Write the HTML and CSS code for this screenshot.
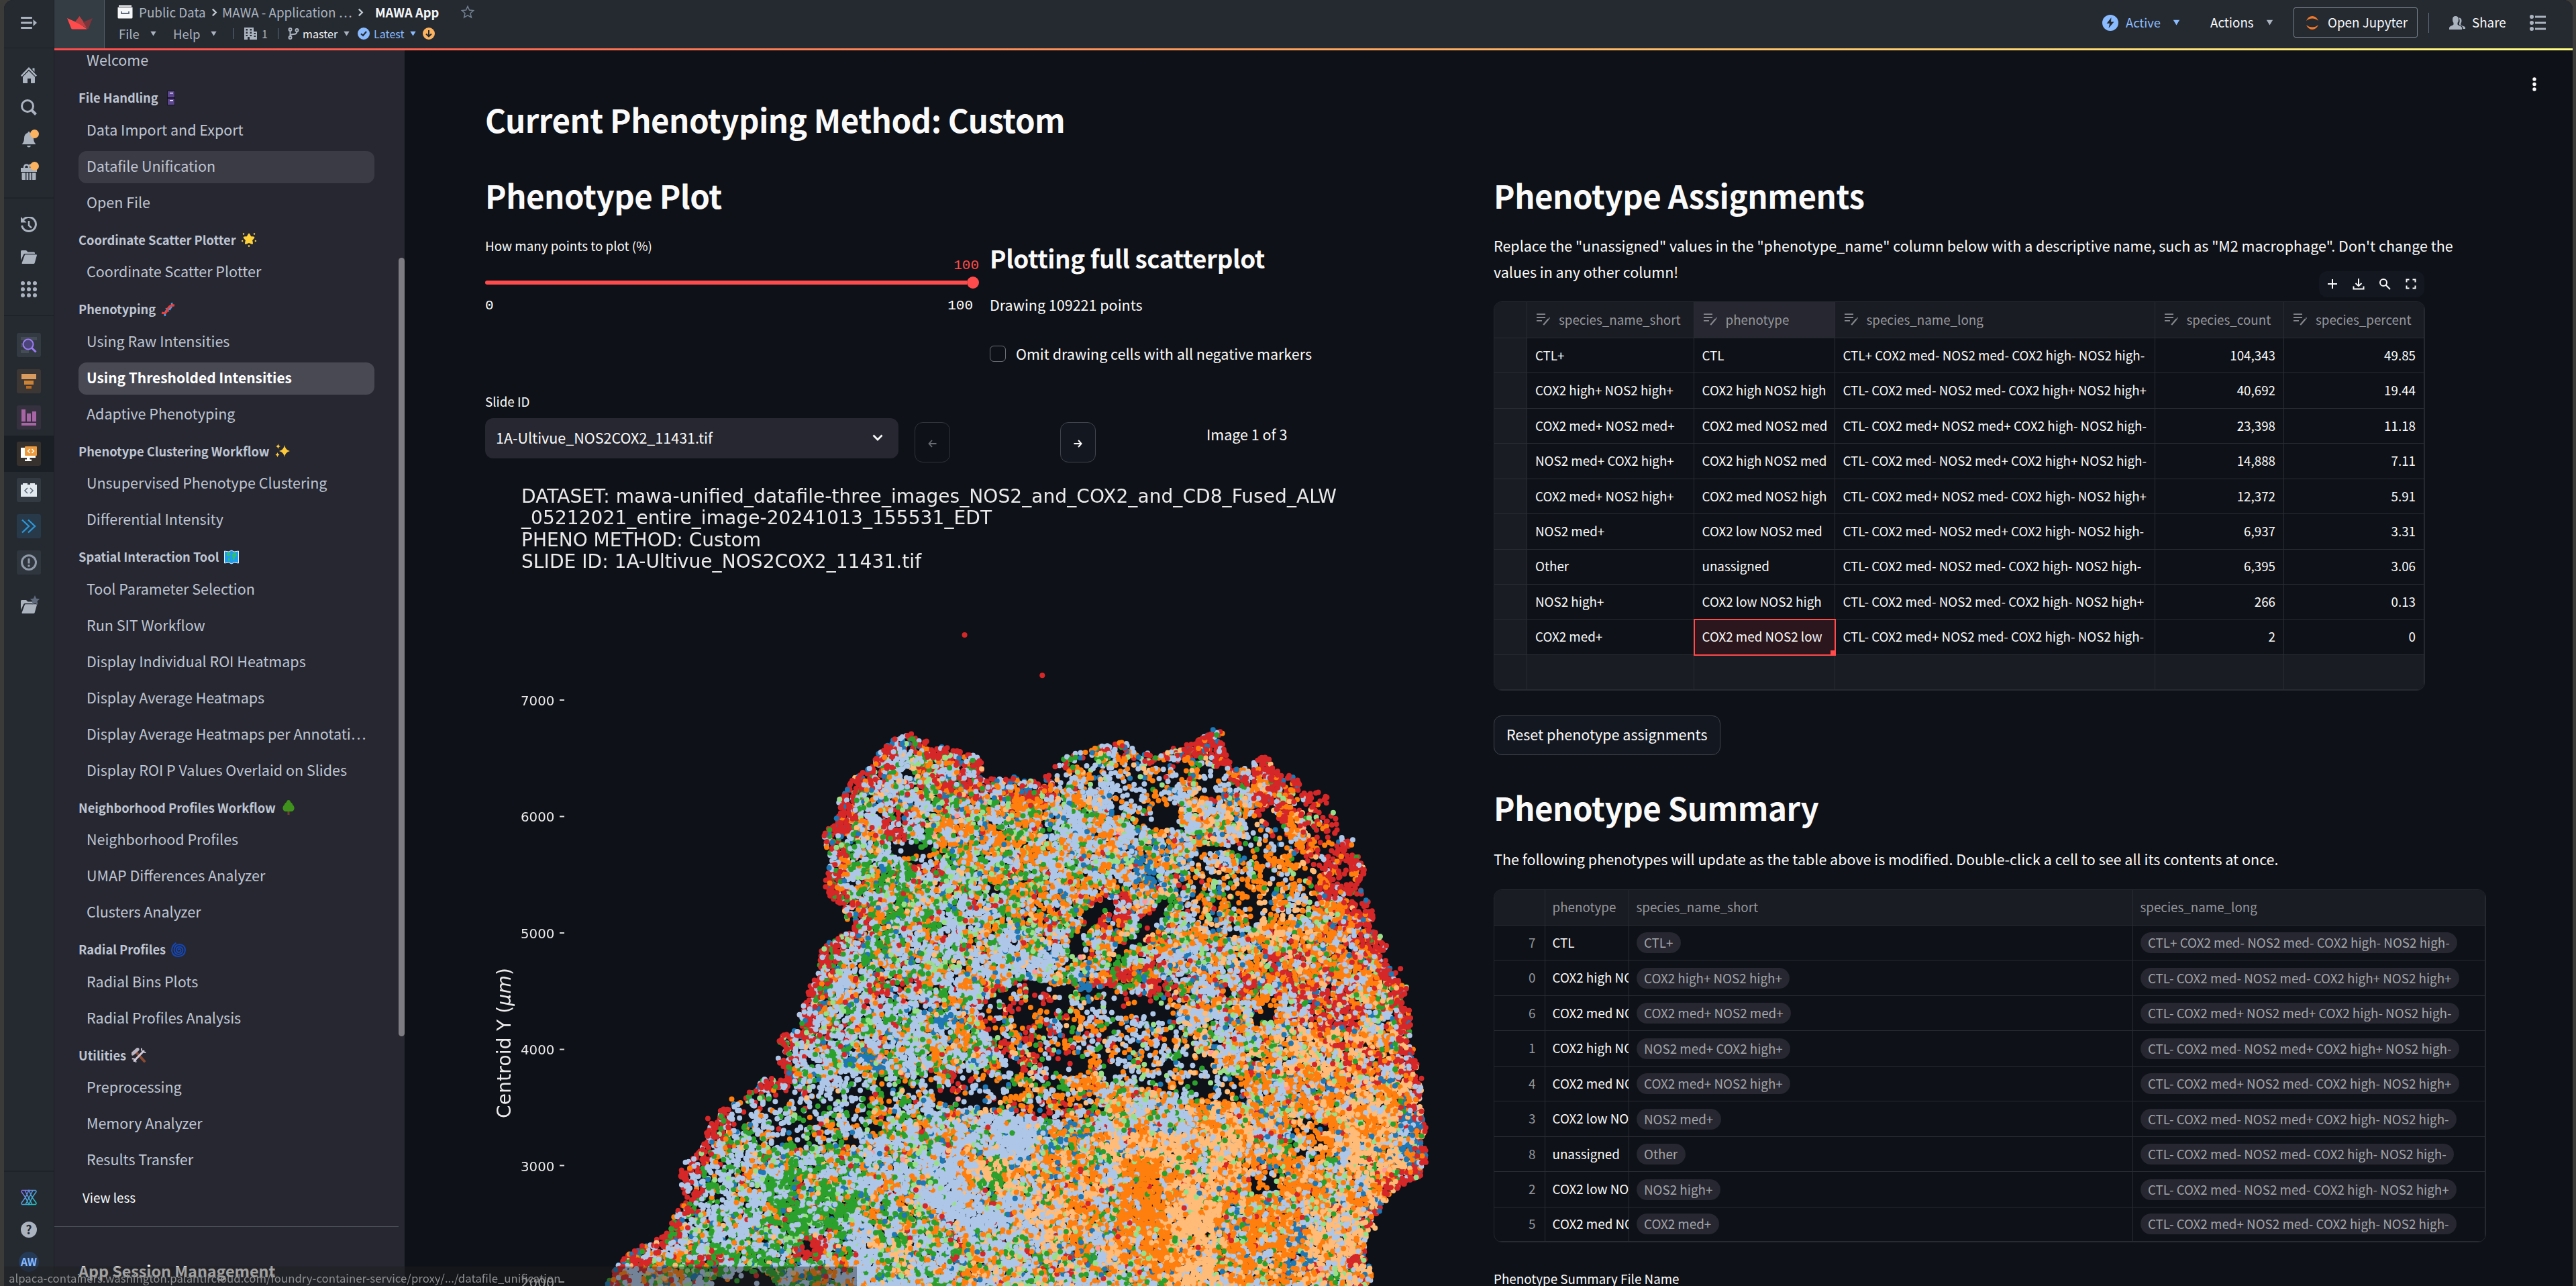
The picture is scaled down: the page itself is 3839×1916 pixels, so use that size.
FILE: index.html
```html
<!DOCTYPE html>
<html lang="en">
<head>
<meta charset="utf-8">
<title>MAWA App</title>
<link rel="stylesheet" href="styles.css">
</head>
<body>
<svg class="defs" aria-hidden="true">
  <symbol id="caret" viewBox="0 0 12 10"><path d="M.8.8h10.4L6 9.4z" fill="currentColor"/></symbol>
  <symbol id="chev" viewBox="0 0 10 14"><path d="M2 1.500 7.500 7 2 12.500" fill="none" stroke="currentColor" stroke-width="2.600"/></symbol>
  <symbol id="folder" viewBox="0 0 24 20"><path d="M0 15V1.500Q0 0 1.500 0H8l2.500 2.500H19.500Q21 2.500 21 4v1H6Q4.500 5 4 6.500z"/><path d="M5.800 7.200Q6.200 6.300 7 6.300H23Q24.200 6.300 23.900 7.500L20.800 18.500Q20.400 20 19 20H2.500Q1.200 20 1.600 18.700z"/></symbol>
  <symbol id="edit" viewBox="0 0 20 18"><g fill="none" stroke="currentColor" stroke-width="1.800"><path d="M0 1.200h13M0 6h13M0 10.800h8"/><path d="M10.200 17 18 8" stroke-width="2.200"/><path d="M18.600 7.400l.9-1"/></g></symbol>
</svg>
<div class="window">
  <nav class="rail">
    <div class="rail-top"><svg width="24" height="18" viewBox="0 0 24 18" fill="#abb3bf"><rect width="17" height="3" rx="1"/><rect y="7.500" width="17" height="3" rx="1"/><rect y="15" width="17" height="3" rx="1"/><path d="M18.500 4 24 9l-5.500 5z"/></svg></div>
    <div class="rail-group g1">
      <div class="ri"><svg width="24" height="24" viewBox="0 0 24 24" fill="#abb3bf"><path d="M12 0 24 12.500 22.300 14.200 12 3.600 1.700 14.200 0 12.500 5 7zM17.500 1.500H20.500V7L17.500 4z"/><path d="M3 14.500 12 5.600 21 14.500V23q0 1-1 1H15V17H10V24H4q-1 0-1-1z"/></svg></div>
      <div class="ri"><svg width="24" height="24" viewBox="0 0 24 24" fill="none" stroke="#abb3bf" stroke-width="3"><circle cx="10" cy="10" r="8.500"/><path d="M16.500 16.500 22.500 22.500" stroke-width="4"/></svg></div>
      <div class="ri"><svg width="24" height="24" viewBox="0 0 24 24" fill="#abb3bf"><path d="M12 0q1.600 0 1.600 1.800Q19 3.500 19 10q0 5.500 3.500 9H1.500Q5 15.500 5 10 5 3.500 10.400 1.800 10.400 0 12 0zM9 21h6q-.5 2.600-3 2.600T9 21z"/></svg><i></i></div>
      <div class="ri"><svg width="24" height="24" viewBox="0 0 24 24" fill="#abb3bf"><path d="M0 6H24V12H0zM1.500 13.500H7V24H2.500q-1 0-1-1zM8.500 13.500H11.300V24H8.500zM12.800 13.500H15.600V24H12.800zM17.100 13.500h5.400V23q0 1-1 1H17.100z"/><path d="M5 6Q5 1.500 8.500 1.500T12 6Q12 1.500 15.500 1.500T19 6" fill="none" stroke="#abb3bf" stroke-width="2.500"/></svg><i></i></div>
    </div>
    <div class="rail-group g2">
      <div class="ri"><svg width="24" height="24" viewBox="0 0 24 24" fill="none" stroke="#abb3bf" stroke-width="3"><path d="M3 5.500A10.500 10.500 0 1 1 1.600 13"/><path d="M12 6v7l4 3.500" stroke-width="2.500"/><path d="M0 0v8.500h8.500z" fill="#abb3bf" stroke="none"/></svg></div>
      <div class="ri"><svg width="24" height="20" fill="#abb3bf"><use href="#folder"/></svg></div>
      <div class="ri"><svg width="24" height="24" viewBox="0 0 24 24" fill="#abb3bf"><circle cx="3" cy="3" r="3"/><circle cx="12" cy="3" r="3"/><circle cx="21" cy="3" r="3"/><circle cx="3" cy="12" r="3"/><circle cx="12" cy="12" r="3"/><circle cx="21" cy="12" r="3"/><circle cx="3" cy="21" r="3"/><circle cx="12" cy="21" r="3"/><circle cx="21" cy="21" r="3"/></svg></div>
    </div>
    <div class="rail-group g3">
      <div class="app a1"><svg viewBox="0 0 36 36"><g fill="#454c55"><path d="M6 6H30V11H6zM6 15H18V21H6zM6 25H18V30H6z"/></g><g fill="#4a4478" stroke="#9a7bf5" stroke-width="2"><circle cx="17" cy="17" r="7.500"/><path d="M22.500 22.500 28.500 28.500" stroke-width="3"/></g></svg></div>
      <div class="app a2"><svg viewBox="0 0 36 36"><path d="M7 7H29V15H7z" fill="#d99b5e"/><path d="M11 17H25V23H11z" fill="#cd8336"/><path d="M14 25H22V29H14z" fill="#b96b20"/></svg></div>
      <div class="app a3"><svg viewBox="0 0 36 36" fill="#a765a5"><path d="M7 6H13V24H7zM15 12H21V24H15zM23 9H29V24H23zM7 26H29V30H7z"/></svg></div>
      <div class="app-sel"><div class="app a4"><svg viewBox="0 0 36 36"><path d="M6 9H28V24H19.500V26.500H22V29H12V26.500H15V24H6z" fill="#fff"/><rect x="12" y="7" width="18" height="14" rx="1" fill="#ec9a3c"/><path d="M19.500 11 16.500 14l3 3M22.500 11l3 3-3 3" fill="none" stroke="#fff" stroke-width="1.500"/></svg></div></div>
      <div class="app a5"><svg viewBox="0 0 36 36"><path d="M9 8H16V10H20V8H27V10H30V28H6V10H9z" fill="#e3eaef"/><path d="M16 15 12 19l4 4M20 15l4 4-4 4" fill="none" stroke="#5f6b7c" stroke-width="1.600"/></svg></div>
      <div class="app a6"><svg viewBox="0 0 36 36" fill="none" stroke="#2b95d6" stroke-width="2.400"><path d="M8 8.500 18 18 8 27.500M17 8.500 27 18 17 27.500"/></svg></div>
      <div class="app a7"><svg viewBox="0 0 36 36" fill="none" stroke="#8f99a8" stroke-width="3"><circle cx="18" cy="18" r="10.500"/><path d="M18 12v7.500M18 21.500v3"/></svg></div>
      <div class="ri fav"><svg width="28" height="28" viewBox="0 0 28 28"><g fill="#abb3bf"><svg y="7" width="24" height="20" viewBox="0 0 24 20"><use href="#folder"/></svg></g><path d="M21 0l2.200 4.800 5 .5-3.700 3.500 1 5.200-4.500-2.600-4.500 2.600 1-5.200L13.800 5.300l5-.5z" fill="#5f6b7c"/></svg></div>
    </div>
    <div class="rail-group g4">
      <div class="ri"><svg width="26" height="24" viewBox="0 0 26 24" fill="none" stroke-width="1.500"><defs><linearGradient id="aip" x1="0" y1="0" x2="1" y2="1"><stop offset="0" stop-color="#8a6cf0"/><stop offset=".5" stop-color="#4f9fd8"/><stop offset="1" stop-color="#13c9ba"/></linearGradient></defs><path d="M3 1.500H23Q24.500 2.500 23.800 4L18 12l5.800 8Q24.500 21.500 23 22.500H3Q1.500 21.500 2.200 20L8 12 2.200 4Q1.500 2.500 3 1.500zM7 1.500 18 22.500M19 1.500 8 22.500M8 12 13 1.500 18 12 13 22.500z" stroke="url(#aip)"/></svg></div>
      <div class="ri"><span class="help">?</span></div>
      <div class="ri"><span class="avatar">AW</span></div>
    </div>
  </nav>
  <div class="body">
    <header class="topbar">
      <div class="logo"><svg width="38" height="20" viewBox="0 0 38 20"><path d="M0 3 18 11 30 19.500H8Q6.500 19.500 6 18z" fill="#ff4b4b"/><path d="M18.500 0 26 10.500 31 19 12 8.500z" fill="#bd4043"/><path d="M38 3 32 18Q31.500 19.500 30.500 19.500L24 9z" fill="#7d353b"/></svg></div>
      <div class="crumbs">
        <div class="row1">
          <svg width="23" height="20" viewBox="0 0 23 20"><path d="M2 0H21V2H2zM.5 3H22.500V18q0 1.500-1.500 1.500H2Q.5 19.500.5 18z" fill="#f6f7f9"/><path d="M6 9v3h11V9" fill="none" stroke="#5f6b7c" stroke-width="1.800"/></svg>
          <span>Public Data</span><svg width="9" height="13" class="lt"><use href="#chev"/></svg>
          <span>MAWA - Application …</span><svg width="9" height="13" class="lt"><use href="#chev"/></svg>
          <b>MAWA App</b>
          <svg width="20" height="20" viewBox="0 0 20 20" fill="none" stroke="#738091" stroke-width="1.500"><path d="M10 1.500l2.500 5.600 6.200.6-4.700 4.100 1.400 6.200L10 14.800 4.600 18 6 11.800 1.300 7.700l6.200-.6z"/></svg>
        </div>
        <div class="row2">
          <span>File</span><svg width="11" height="8" class="gr"><use href="#caret"/></svg>
          <span>Help</span><svg width="11" height="8" class="gr"><use href="#caret"/></svg>
          <i class="sep"></i>
          <svg width="19" height="18" viewBox="0 0 19 18"><path fill-rule="evenodd" d="M1 0H14V6H19V18H8V14H5v4H0V0zM2.500 2v2.500H5V2zM8.500 2v2.500H11V2zM2.500 6.500V9H5V6.500zM8.500 6.500V9H11V6.500zM2.500 11v2H5v-2zM8.500 11v2H11v-2zM14.500 8v2H17V8zM14.500 12v2H17v-2z" fill="#abb3bf"/></svg>
          <span class="sm">1</span><i class="sep"></i>
          <svg width="17" height="18" viewBox="0 0 17 18" fill="none" stroke="#abb3bf" stroke-width="2"><circle cx="3.500" cy="3" r="2"/><circle cx="3.500" cy="15" r="2"/><circle cx="13.500" cy="4" r="2"/><path d="M3.500 5v8M13.500 6q0 4-5 4-5 .2-5 3"/></svg>
          <span class="wh sm">master</span><svg width="11" height="8" class="gr"><use href="#caret"/></svg>
          <svg width="18" height="18" viewBox="0 0 18 18"><circle cx="9" cy="9" r="9" fill="#8abbff"/><path d="M5 9.200 8 12l5-6" fill="none" stroke="#252a31" stroke-width="2.200"/></svg>
          <span class="bl sm">Latest</span><svg width="11" height="8" class="bl"><use href="#caret"/></svg>
          <svg width="18" height="18" viewBox="0 0 18 18"><circle cx="9" cy="9" r="9" fill="#fbb360"/><path d="M9 4v9M5 9.500 9 13.300l4-3.800" fill="none" stroke="#252a31" stroke-width="2"/></svg>
        </div>
      </div>
      <div class="actions">
        <svg width="24" height="24" viewBox="0 0 24 24"><circle cx="12" cy="12" r="12" fill="#8abbff"/><path d="M13.500 4 6.500 13H11L9.500 20 17.500 10.500H13z" fill="#252a31"/></svg>
        <span class="bl">Active</span><svg width="13" height="9" class="bl"><use href="#caret"/></svg>
        <span class="wh">Actions</span><svg width="13" height="9" class="gr"><use href="#caret"/></svg>
        <button class="jup"><svg width="18" height="20" viewBox="0 0 18 20" fill="#f37726"><path d="M0 7Q3 0 9 0t9 7Q14 3.500 9 3.500T0 7zM0 13Q3 20 9 20t9-7Q14 16.500 9 16.500T0 13z"/></svg><span>Open Jupyter</span></button>
        <i class="sep tall"></i>
        <svg width="24" height="20" viewBox="0 0 24 20" fill="#abb3bf"><path d="M9.500 0q4.500 0 4.500 5 0 3-1.500 5v2.500q1 1.500 4 2.300 2.500.8 2.500 3V20H0v-2.200q0-2.200 2.500-3 3-.8 4-2.300V10Q5 8 5 5 5 0 9.500 0z"/><path d="M14.500 2.500q4 0 4 4.500 0 2.500-1.200 4v2q.8 1 3.200 1.700 3.500 1 3.500 2.300V19h-3.500q.3-3.500-3-4.700-2.500-1-2.500-1.800V10.500Q16.500 7 14.500 2.500z"/></svg>
        <span class="wh">Share</span>
        <svg width="24" height="24" viewBox="0 0 24 24" fill="#abb3bf"><circle cx="3" cy="3" r="3"/><circle cx="3" cy="12" r="3"/><circle cx="3" cy="21" r="3"/><rect x="8" y="1.500" width="16" height="3"/><rect x="8" y="10.500" width="16" height="3"/><rect x="8" y="19.500" width="16" height="3"/></svg>
      </div>
    </header>
    <div class="panes">
      <aside class="side">
        <div class="nav">
          <a>Welcome</a>
          <h6>File Handling <svg class="em" viewBox="0 0 22 22"><path d="M5 0H17V22H5z" fill="#17141f"/><path d="M6 1H16V10H6zM6 12H16V21H6z" fill="#5b4591"/><path d="M9 3h5v1.500H9zM9 14h5v1.500H9z" fill="#e8e2f5"/></svg></h6>
          <a>Data Import and Export</a><a class="hover">Datafile Unification</a><a>Open File</a>
          <h6>Coordinate Scatter Plotter <svg class="em" viewBox="0 0 22 22" fill="#ffd23b"><path d="M11 3l2.200 4.200 4.800.6-3.200 3.800.9 5L11 14.500 6.300 16.600l.9-5L4 7.800l4.800-.6z" stroke="#ffd23b" stroke-width="2.600" stroke-linejoin="round"/><circle cx="3" cy="2.500" r="1.200"/><circle cx="19" cy="2.500" r="1.200"/><circle cx="1.200" cy="13" r="1.200"/><circle cx="20.800" cy="13" r="1.200"/><circle cx="11" cy="20.600" r="1.300"/></svg></h6>
          <a>Coordinate Scatter Plotter</a>
          <h6>Phenotyping <svg class="em" viewBox="0 0 22 22" fill="none" stroke-width="2.600"><path d="M7 9l5 5M10 8l4 4M3 16l3 3M16 3l3 3" stroke="#9aa7c9" stroke-width="1.200"/><path d="M6 21Q5 13 11 11T16 1" stroke="#3fa0ee"/><path d="M1 16Q8 18 10 11T20 5" stroke="#f03e3a" stroke-width="3"/></svg></h6>
          <a>Using Raw Intensities</a><a class="on">Using Thresholded Intensities</a><a>Adaptive Phenotyping</a>
          <h6>Phenotype Clustering Workflow <svg class="em" viewBox="0 0 22 22" fill="#fdc83a"><path d="M14 2Q15 9 22 11 15 13 14 20 13 13 6 11 13 9 14 2zM4.500 0Q5 3.500 8 4 5 4.500 4.500 8 4 4.500 1 4 4 3.500 4.500 0zM3.500 13Q4 16 6.500 16.500 4 17 3.500 20.500 3 17 .5 16.500 3 16 3.500 13z"/></svg></h6>
          <a>Unsupervised Phenotype Clustering</a><a>Differential Intensity</a>
          <h6>Spatial Interaction Tool <svg class="em" viewBox="0 0 22 22"><path d="M.5 2 7 3l4-2 4 2 6.500-1V20L15 19l-4 2-4-2-6.500 1z" fill="#1e9df0" stroke="#e4f3ff"/><path d="M4 5 8 4l2 3-3 3-3-1zM6 12l3 1-1 5-2-2zM12 6l5-2 2 4-3 4-1 4-2-1z" fill="#2fbf71"/></svg></h6>
          <a>Tool Parameter Selection</a><a>Run SIT Workflow</a><a>Display Individual ROI Heatmaps</a><a>Display Average Heatmaps</a><a>Display Average Heatmaps per Annotati…</a><a>Display ROI P Values Overlaid on Slides</a>
          <h6>Neighborhood Profiles Workflow <svg class="em" viewBox="0 0 22 22"><path d="M9.500 14h3v8h-3z" fill="#6d4030"/><path d="M11 0q2.500 0 3 3 3 1.500 3.500 4.500Q20 9.500 19.500 13q-.8 4-4.500 4H7q-3.700 0-4.500-4Q2 9.500 4.500 7.500 5 4.500 8 3q.5-3 3-3z" fill="#3f921b"/></svg></h6>
          <a>Neighborhood Profiles</a><a>UMAP Differences Analyzer</a><a>Clusters Analyzer</a>
          <h6>Radial Profiles <svg class="em" viewBox="0 0 22 22" fill="none" stroke="#1447b8" stroke-width="2"><path d="M7.500 1Q1 4.500 1 12.500 2.500 21 11 21q9.500-.5 10-9.500Q20.500 3.500 12.500 3 5 3.500 4.500 11q.5 6.500 6.500 7 6-.5 6.500-6.500Q17 7 12 6.500 7.500 7.500 7.700 11.500 8.500 15 11.500 15q3-.5 3-3.300Q14 9.500 12 9.700q-1.800.6-1.200 2.300"/></svg></h6>
          <a>Radial Bins Plots</a><a>Radial Profiles Analysis</a>
          <h6>Utilities <svg class="em" viewBox="0 0 22 22" fill="none" stroke-linecap="round"><path d="M8 8 19 20" stroke="#8a4b32" stroke-width="4"/><path d="M1.500 9 9 2.500" stroke="#b9b4c2" stroke-width="5"/><path d="M4 19.500 18 5" stroke="#cfc9d8" stroke-width="3"/><path d="M15 1.500Q14.500 6.500 20.500 7M1.500 16.500Q6 16 6.500 21" stroke="#cfc9d8" stroke-width="2"/></svg></h6>
          <a>Preprocessing</a><a>Memory Analyzer</a><a>Results Transfer</a>
          <div class="less">View less</div>
          <hr>
          <h3>App Session Management</h3>
        </div>
        <div class="track"><div class="bar"></div></div>
      </aside>
      <main class="main">
        <svg class="kebab" width="6" height="22" viewBox="0 0 6 22" fill="#fafafa"><circle cx="3" cy="3" r="2.700"/><circle cx="3" cy="10.500" r="2.700"/><circle cx="3" cy="18" r="2.700"/></svg>
        <h2 class="title">Current Phenotyping Method: Custom</h2>
        <div class="cols">
          <section>
            <h2>Phenotype Plot</h2>
            <div class="ctl">
              <div>
                <div class="label">How many points to plot (%)</div>
                <div class="val">100</div>
                <div class="slider"><div class="line"></div><div class="thumb"></div></div>
                <div class="bounds"><span>0</span><span>100</span></div>
              </div>
              <div>
                <h3 class="h3">Plotting full scatterplot</h3>
                <p class="draw">Drawing 109221 points</p>
                <label class="check"><i></i>Omit drawing cells with all negative markers</label>
              </div>
            </div>
            <div class="slide">
              <div><div class="label">Slide ID</div>
                <div class="select"><span>1A-Ultivue_NOS2COX2_11431.tif</span><svg width="16" height="10" viewBox="0 0 16 10"><path d="M1.500 1.500 8 8l6.500-6.500" fill="none" stroke="#fafafa" stroke-width="2.800"/></svg></div></div>
              <button class="arrow off"><svg width="13" height="12" viewBox="0 0 13 12"><path d="M12.500 6H1.500M6 1 1.500 6 6 11" fill="none" stroke="currentColor" stroke-width="1.800"/></svg></button>
              <button class="arrow"><svg width="13" height="12" viewBox="0 0 13 12"><path d="M.5 6h11M7 1l4.500 5L7 11" fill="none" stroke="currentColor" stroke-width="2"/></svg></button>
              <p class="count">Image 1 of 3</p>
            </div>
            <div class="plot">
              <canvas id="cells" width="1479" height="1211"></canvas>
              <svg viewBox="723 705 1479 1211" width="1479" height="1211" class="axes">
                <g font-size="28">
                  <text x="777" y="749" textLength="1215">DATASET: mawa-unified_datafile-three_images_NOS2_and_COX2_and_CD8_Fused_ALW</text>
                  <text x="777" y="781" textLength="701">_05212021_entire_image-20241013_155531_EDT</text>
                  <text x="777" y="814" textLength="357">PHENO METHOD: Custom</text>
                  <text x="777" y="846" textLength="596">SLIDE ID: 1A-Ultivue_NOS2COX2_11431.tif</text>
                  <text transform="translate(761 1666) rotate(-90)" textLength="224">Centroid Y (<tspan font-style="italic">μm</tspan>)</text>
                </g>
                <g font-size="19.800">
                  <text x="776" y="1051">7000</text><text x="776" y="1224">6000</text><text x="776" y="1398">5000</text><text x="776" y="1571">4000</text><text x="776" y="1745">3000</text><text x="776" y="1918">2000</text>
                </g>
                <path d="M834 1043H841M834 1216.500H841M834 1390H841M834 1563.500H841M834 1736.500H841M834 1910H841" stroke="#d8d8d8" stroke-width="2"/>
              </svg>
            </div>
          </section>
          <section>
            <h2>Phenotype Assignments</h2>
            <p class="para">Replace the "unassigned" values in the "phenotype_name" column below with a descriptive name, such as "M2 macrophage". Don't change the values in any other column!</p>
            <div class="wrap">
              <div class="tools">
                <svg viewBox="0 0 18 18"><path d="M9 2v14M2 9h14"/></svg>
                <svg viewBox="0 0 18 18"><path d="M9 1v11M4.500 8 9 12.200 13.500 8M1.500 12.500v4h15v-4"/></svg>
                <svg viewBox="0 0 18 18"><circle cx="7" cy="7" r="5"/><path d="M10.500 10.500 17 17"/></svg>
                <svg viewBox="0 0 18 18"><path d="M2.500 6.500v-4h4M11.500 2.500h4v4M15.500 11.500v4h-4M6.500 15.500h-4v-4"/></svg>
              </div>
              <div class="t1">
                <b></b><b><svg><use href="#edit"/></svg>species_name_short</b><b class="act"><svg><use href="#edit"/></svg>phenotype</b><b><svg><use href="#edit"/></svg>species_name_long</b><b><svg><use href="#edit"/></svg>species_count</b><b><svg><use href="#edit"/></svg>species_percent</b>
                <i></i><i>CTL+</i><i>CTL</i><i>CTL+ COX2 med- NOS2 med- COX2 high- NOS2 high-</i><i>104,343</i><i>49.85</i>
                <i></i><i>COX2 high+ NOS2 high+</i><i>COX2 high NOS2 high</i><i>CTL- COX2 med- NOS2 med- COX2 high+ NOS2 high+</i><i>40,692</i><i>19.44</i>
                <i></i><i>COX2 med+ NOS2 med+</i><i>COX2 med NOS2 med</i><i>CTL- COX2 med+ NOS2 med+ COX2 high- NOS2 high-</i><i>23,398</i><i>11.18</i>
                <i></i><i>NOS2 med+ COX2 high+</i><i>COX2 high NOS2 med</i><i>CTL- COX2 med- NOS2 med+ COX2 high+ NOS2 high-</i><i>14,888</i><i>7.11</i>
                <i></i><i>COX2 med+ NOS2 high+</i><i>COX2 med NOS2 high</i><i>CTL- COX2 med+ NOS2 med- COX2 high- NOS2 high+</i><i>12,372</i><i>5.91</i>
                <i></i><i>NOS2 med+</i><i>COX2 low NOS2 med</i><i>CTL- COX2 med- NOS2 med+ COX2 high- NOS2 high-</i><i>6,937</i><i>3.31</i>
                <i></i><i>Other</i><i>unassigned</i><i>CTL- COX2 med- NOS2 med- COX2 high- NOS2 high-</i><i>6,395</i><i>3.06</i>
                <i></i><i>NOS2 high+</i><i>COX2 low NOS2 high</i><i>CTL- COX2 med- NOS2 med- COX2 high- NOS2 high+</i><i>266</i><i>0.13</i>
                <i></i><i>COX2 med+</i><i class="sel">COX2 med NOS2 low</i><i>CTL- COX2 med+ NOS2 med- COX2 high- NOS2 high-</i><i>2</i><i>0</i>
                <b></b><b></b><b></b><b></b><b></b><b></b>
              </div>
            </div>
            <button class="reset">Reset phenotype assignments</button>
            <h2 class="sum">Phenotype Summary</h2>
            <p class="para p2">The following phenotypes will update as the table above is modified. Double-click a cell to see all its contents at once.</p>
            <div class="t2">
              <b></b><b>phenotype</b><b>species_name_short</b><b>species_name_long</b>
              <i>7</i><i>CTL</i><i><u>CTL+</u></i><i><u>CTL+ COX2 med- NOS2 med- COX2 high- NOS2 high-</u></i>
              <i>0</i><i>COX2 high NOS2 high</i><i><u>COX2 high+ NOS2 high+</u></i><i><u>CTL- COX2 med- NOS2 med- COX2 high+ NOS2 high+</u></i>
              <i>6</i><i>COX2 med NOS2 med</i><i><u>COX2 med+ NOS2 med+</u></i><i><u>CTL- COX2 med+ NOS2 med+ COX2 high- NOS2 high-</u></i>
              <i>1</i><i>COX2 high NOS2 med</i><i><u>NOS2 med+ COX2 high+</u></i><i><u>CTL- COX2 med- NOS2 med+ COX2 high+ NOS2 high-</u></i>
              <i>4</i><i>COX2 med NOS2 high</i><i><u>COX2 med+ NOS2 high+</u></i><i><u>CTL- COX2 med+ NOS2 med- COX2 high- NOS2 high+</u></i>
              <i>3</i><i>COX2 low NOS2 med</i><i><u>NOS2 med+</u></i><i><u>CTL- COX2 med- NOS2 med+ COX2 high- NOS2 high-</u></i>
              <i>8</i><i>unassigned</i><i><u>Other</u></i><i><u>CTL- COX2 med- NOS2 med- COX2 high- NOS2 high-</u></i>
              <i>2</i><i>COX2 low NOS2 high</i><i><u>NOS2 high+</u></i><i><u>CTL- COX2 med- NOS2 med- COX2 high- NOS2 high+</u></i>
              <i>5</i><i>COX2 med NOS2 low</i><i><u>COX2 med+</u></i><i><u>CTL- COX2 med+ NOS2 med- COX2 high- NOS2 high-</u></i>
            </div>
            <div class="label fname">Phenotype Summary File Name</div>
          </section>
        </div>
      </main>
    </div>
  </div>
  <div class="status">alpaca-containers.washington.palantircloud.com/foundry-container-service/proxy/.../datafile_unification</div>
</div>
<script src="plot.js"></script>
</body>
</html>
```
FILE: styles.css
```css
* { box-sizing: border-box; }
html, body { margin: 0; padding: 0; }
body { width: 3839px; height: 1916px; overflow: hidden; background: #3b3b39; color: #fafafa; font-family: "Noto Sans CJK SC", "Noto Sans", sans-serif; font-size: 21.500px; line-height: 1; }
h2, h3, h6, p { margin: 0; }
i, u { font-style: normal; text-decoration: none; }
svg { flex: none; display: block; }
button { font: inherit; color: inherit; padding: 0; margin: 0; }
.defs { position: absolute; width: 0; height: 0; }
.window { position: relative; display: flex; width: 3828px; height: 1916px; margin-left: 6px; border-radius: 14px 14px 0 0; overflow: hidden; background: #0e1117; }

.rail { width: 75px; height: 1916px; flex: none; background: #252a31; border-right: 1px solid #1b1f26; display: flex; flex-direction: column; }
.rail-top { height: 72px; border-bottom: 1px solid #1b1f26; display: flex; align-items: center; justify-content: center; padding-bottom: 3px; }
.rail-group { display: flex; flex-direction: column; align-items: center; border-bottom: 2px solid #1e2329; }
.ri { position: relative; height: 48px; width: 100%; flex: none; display: flex; align-items: center; justify-content: center; }
.ri > i { position: absolute; left: 39px; top: 9px; width: 13px; height: 13px; border-radius: 50%; background: #fbb360; }
.g1 { height: 224px; padding-top: 16px; }
.g2 { height: 175px; padding-top: 15px; }
.g3 { flex: 1; padding-top: 16px; border: 0; }
.g4 { height: 172px; padding-top: 14px; border: 0; border-top: 2px solid #1e2329; }
.app { width: 36px; height: 36px; margin: 9px 0; border-radius: 3px; background: #343a42; flex: none; }
.app-sel { width: 100%; height: 54px; flex: none; background: #1a1f25; display: flex; justify-content: center; }
.a2 { background: #3c3734; }
.a3 { background: #35313e; }
.a4 { background: #37312e; }
.a6 { background: #28394a; }
.a7 { background: #30363e; }
.fav { height: 62px; padding-left: 4px; margin-top: 5px; }
.help { width: 24px; height: 24px; border-radius: 50%; background: #abb3bf; color: #252a31; font-weight: 700; font-size: 18px; line-height: 22px; text-align: center; }
.avatar { width: 30px; height: 30px; border-radius: 50%; background: #253a56; color: #8abbff; font-weight: 700; font-size: 15.500px; line-height: 28px; text-align: center; }

.body { flex: 1; display: flex; flex-direction: column; min-width: 0; }
.topbar { height: 75px; flex: none; display: flex; background: #252a31; border-bottom: 3px solid; border-image: linear-gradient(90deg, #ff4b4b, #ffa35b 50%, #fffd80) 1; }
.logo { width: 75px; height: 72px; background: #343c44; border-right: 1px solid #555c66; display: flex; align-items: center; justify-content: center; padding: 0 0 5px 2px; }
.crumbs { padding-left: 19px; flex: 1; color: #abb3bf; font-size: 18.500px; white-space: nowrap; }
.row1 { height: 37px; display: grid; grid-template-columns: 32px 108px 16px 202px 26px 128px 30px; align-items: center; font-size: 18.800px; padding-bottom: 1px; }
.row1 b, .wh { color: #f6f7f9; }
.row1 b { font-size: 18.300px; }
.lt { color: #c5cbd3; }
.row2 { height: 26px; padding-left: 2px; display: grid; grid-template-columns: 46px 35px 55px 34px 17px 26px 24px 15px 22px 60px 22px 24px 53px 20px 20px; align-items: center; }
.sm { font-size: 16.100px; }
.sep { width: 1px; height: 16px; background: #5f6b7c; }
.gr { color: #abb3bf; }
.bl { color: #8abbff; }
.actions { display: grid; grid-template-columns: 35px 69px 57px 82px 42px 201px 31px 34px 86px 24px; align-items: center; width: 701px; padding-bottom: 5px; height: 72px; font-size: 18.800px; white-space: nowrap; }
.actions > .bl:nth-child(2) { font-size: 18.400px; }
.jup { width: 185px; height: 45px; border: 1px solid #7b828d; border-radius: 3px; background: none; display: flex; align-items: center; padding-left: 18px; gap: 14px; color: #f6f7f9; }
.sep.tall { height: 30px; }

.panes { flex: 1; display: flex; min-height: 0; }
.side { width: 522px; flex: none; background: #262730; display: flex; overflow: hidden; }
.nav { width: 513px; height: 1841px; overflow: hidden; }
.nav > a:first-child { margin-top: -8px; }
.nav a { display: block; height: 48px; margin: 0 36px 6px; padding-left: 12px; border-radius: 12px; line-height: 44px; color: #bfc5d3; white-space: nowrap; }
.nav a.hover { background: #3b3b46; }
.nav a.on { background: #484953; color: #fff; font-weight: 700; font-size: 20.900px; }
.nav h6 { height: 49.500px; margin-top: -4px; margin-bottom: 4px; padding: 8px 0 0 36px; line-height: 41.500px; font-size: 18.250px; color: #bfc5d3; display: flex; align-items: center; gap: 8px; white-space: nowrap; }
.em { width: 22px; height: 22px; }
.less { margin: -4px 0 0 42px; height: 58px; line-height: 58px; font-size: 18.800px; }
.nav hr { margin: 14px 0 0; border: 0; height: 1px; background: #50525b; }
.nav h3 { margin: 40px 0 0 36px; line-height: 50px; font-size: 23.300px; }
.track { width: 9px; padding-top: 309px; }
.bar { height: 1160px; width: 9px; border-radius: 5px; background: #7d7c83; }

.main { flex: 1; position: relative; padding: 69px 0 0 120px; overflow: hidden; }
.kebab { position: absolute; left: 3171px; top: 40px; }
h2 { font-size: 47.400px; line-height: 65px; height: 65px; font-weight: 700; white-space: nowrap; letter-spacing: -.450px; }
.title { line-height: 67px; letter-spacing: -.500px; }
.cols { margin-top: 48.500px; display: grid; grid-template-columns: 1479px 1490px; gap: 24px; }
.label { font-size: 18.800px; line-height: 30px; height: 30px; }
.ctl { margin-top: 28.500px; display: grid; grid-template-columns: 736px 1fr; gap: 16px; height: 188px; }
.val, .bounds { font-family: "Liberation Mono", monospace; font-size: 21px; }
.val { height: 28px; line-height: 30px; text-align: right; color: #ff4b4b; }
.slider { height: 24px; display: flex; align-items: center; }
.line { width: 719px; height: 6px; border-radius: 3px 0 0 3px; background: #ff4b4b; }
.thumb { width: 18px; height: 18px; border-radius: 50%; background: #ff4b4b; }
.bounds { margin: 7px 9px 0 0; height: 30px; line-height: 31px; display: flex; justify-content: space-between; }
.h3 { margin-top: 7.600px; font-size: 36.800px; line-height: 50px; letter-spacing: -.400px; }
.draw { margin-top: 26.400px; line-height: 37px; height: 38px; }
.check { margin-top: 42px; display: flex; gap: 15px; line-height: 23px; height: 24px; }
.check i { width: 24px; height: 24px; border: 1.500px solid #6c6f78; border-radius: 6px; }
.slide { margin-top: 44px; display: grid; grid-template-columns: 616px 193px 194px 1fr; gap: 24px; height: 122px; }
.select { margin-top: 10px; height: 60px; border-radius: 12px; background: #262730; display: flex; align-items: center; justify-content: space-between; padding: 0 23px 2px 16px; }
.arrow { margin-top: 46px; width: 53px; height: 60px; border: 1px solid #41444c; border-radius: 12px; background: #131720; display: flex; align-items: center; justify-content: center; padding-top: 4px; }
.off { border-color: #32343b; background: none; color: #696c73; }
.count { margin-top: 46px; line-height: 36px; }
.plot { display: grid; }
.plot > * { grid-area: 1 / 1; }
.axes { font-family: "DejaVu Sans", sans-serif; fill: #ebebeb; }
.para { margin-top: 24.500px; line-height: 38.800px; width: 1490px; }
.wrap { position: relative; margin-top: 24.400px; }
.tools { position: absolute; left: 1230px; top: -45px; width: 157px; height: 39px; border-radius: 12px; background: #131720; display: flex; justify-content: space-around; align-items: center; }
.tools svg { width: 18px; height: 18px; fill: none; stroke: #fafafa; stroke-width: 2; }
.t1, .t2 { display: grid; border: 1px solid #25282f; border-radius: 12px; overflow: hidden; font-size: 18.800px; white-space: nowrap; }
.t1 { width: 1388px; height: 580px; grid-template-columns: 49px 248.500px 210px 477px 192.500px 1fr; grid-template-rows: 54px repeat(9, 52.450px) 1fr; }
.t2 { width: 1479px; height: 526px; margin-top: 25.600px; grid-template-columns: 75.500px 125px 751px 1fr; grid-template-rows: 53px repeat(8, 52.500px) 1fr; }
.t1 > *, .t2 > * { border-right: 1px solid #2a2c34; border-bottom: 1px solid #2a2c34; padding: 0 12px 1px; display: flex; align-items: center; overflow: hidden; min-width: 0; }
.t1 > b, .t2 > b, .t1 > :nth-child(6n+1) { background: #1a1c24; color: #94969b; font-weight: 400; }
.t1 > b { padding-right: 0; }
.t1 > b.act { background: #262730; }
.t1 b svg { width: 20px; height: 18px; margin: 0 13px 0 2px; color: #85878c; }
.t1 i:nth-child(6n+5), .t1 i:nth-child(6n) { justify-content: flex-end; }
.t1 .sel { position: relative; background: #2a161c; outline: 2px solid #ff4b4b; outline-offset: -1px; overflow: visible; z-index: 1; }
.sel::after { content: ""; position: absolute; right: -1px; bottom: -1px; width: 7px; height: 7px; background: #ff4b4b; }
.t2 > * { padding-left: 11px; }
.t2 > i:nth-child(4n+1) { justify-content: flex-end; color: #94969b; padding-right: 13px; }
.t2 > i:nth-child(4n+2) { padding-right: 0; }
.t2 u { height: 31px; line-height: 29px; border-radius: 16px; padding: 0 11.500px; background: #262730; color: #a3a4a9; margin-top: 1px; }
.reset { display: block; margin-top: 37px; width: 337.500px; height: 59px; border: 1px solid #41444c; border-radius: 12px; background: #131720; padding-bottom: 3px; }
.sum { margin-top: 45.500px; }
.p2 { margin-top: 25.500px; line-height: 38.400px; }
.fname { margin-top: 39px; }
.status { position: absolute; left: 0; bottom: 0; width: 1271px; height: 29px; padding-left: 7px; line-height: 34px; font-size: 16.800px; background: rgba(30, 30, 30, .4); color: #8f9092; white-space: nowrap; }
```
FILE: plot.js
```js
// Cell scatter: one dot per cell, coloured by phenotype (tab20 palette).
const ctx = document.getElementById('cells').getContext('2d');
const COLORS = ['#1f77b4', '#aec7e8', '#ff7f0e', '#ffbb78', '#2ca02c', '#98df8a', '#d62728', '#ff9896'];
const BLUE = 0, LBLUE = 1, ORANGE = 2, LORANGE = 3, GREEN = 4, LGREEN = 5, RED = 6;

// Tissue coordinates to canvas pixels.
const SX = 1500 / 1568, SY = 1016 / 1568;
const px = u => u * SX - 23, py = v => v * SY + 195;

const outline = [[205,1590],[222,1535],[245,1495],[270,1475],[305,1450],[322,1400],[335,1360],[328,1300],[345,1270],[365,1225],[390,1170],[410,1130],[445,1120],[455,1090],[490,1095],[490,1050],[478,1010],[485,990],[515,975],[512,940],[528,890],[540,850],[545,800],[565,770],[590,755],[598,720],[570,700],[555,650],[562,600],[555,530],[572,490],[585,430],[600,395],[625,375],[640,335],[660,310],[680,302],[715,320],[755,335],[775,345],[798,350],[800,390],[830,405],[860,390],[885,425],[905,380],[930,350],[970,335],[1010,318],[1070,355],[1090,335],[1130,318],[1160,290],[1185,325],[1180,370],[1210,380],[1240,340],[1255,380],[1290,410],[1325,435],[1345,500],[1368,540],[1385,600],[1400,680],[1410,750],[1430,810],[1455,870],[1465,950],[1475,1080],[1485,1170],[1492,1280],[1480,1320],[1440,1350],[1415,1400],[1400,1460],[1400,1510],[1410,1590]];

// Sparse areas: share of cells kept, then the polygon.
const voids = [
  [.4, [[905,380],[960,345],[1060,360],[1180,370],[1200,430],[1150,450],[1100,430],[1000,420],[900,430]]],
  [.3, [[1000,430],[1080,420],[1110,470],[1110,520],[1070,520],[1010,500]]],
  [.06, [[1030,480],[1100,480],[1110,520],[1060,525]]],
  [.3, [[1190,470],[1240,460],[1270,520],[1290,560],[1250,580],[1200,520]]],
  [.45, [[1130,560],[1200,540],[1320,570],[1330,650],[1290,720],[1240,740],[1180,770],[1110,720],[1100,640]]],
  [.48, [[1260,400],[1330,440],[1360,560],[1390,700],[1340,650],[1320,560],[1290,500]]],
  [.04, [[985,665],[1005,680],[960,770],[935,850],[925,840],[945,750]]],
  [.04, [[1075,680],[1095,690],[1060,760],[1020,810],[1000,850],[995,820],[1040,740]]],
  [.36, [[790,900],[860,868],[950,880],[1000,880],[1110,890],[1100,950],[1140,1020],[1200,1090],[1215,1150],[1130,1140],[1060,1120],[980,1090],[900,1085],[830,1070],[800,960]]],
  [.02, [[850,865],[890,868],[935,882],[920,900],[860,880]]],
  [.14, [[990,900],[1090,900],[1060,950],[1000,940]]],
  [.05, [[900,1050],[980,1040],[970,1075],[900,1085]]],
  [.45, [[690,1085],[830,1060],[960,1110],[1000,1170],[930,1190],[850,1170],[720,1170]]],
  [.06, [[720,1120],[800,1130],[800,1155],[730,1150]]],
  [.49, [[400,1140],[560,1080],[700,1090],[710,1180],[600,1240],[470,1250],[400,1210]]],
  [.6, [[335,1290],[370,1230],[430,1220],[430,1300],[380,1420],[330,1430]]],
  [.3, [[1200,1280],[1260,1300],[1260,1350],[1220,1360]]],
  [.5, [[1280,1180],[1340,1190],[1330,1290],[1270,1290]]],
  [.25, [[1220,970],[1250,890],[1265,890],[1240,980]]],
  [.03, [[370,1590],[390,1550],[430,1528],[465,1540],[490,1590]]],
  [.1, [[515,1455],[535,1465],[540,1490],[515,1480]]],
  [.35, [[650,540],[720,545],[750,590],[700,610],[650,570]]]
];

// Local enrichments: colour, centre, radii, weight.
const zones = [
  [RED,660,495,32,45,5],[RED,715,615,25,40,2],[RED,1330,940,48,55,14],[RED,1290,840,45,55,6],[RED,1200,870,35,35,5],
  [RED,1005,715,26,50,10],[RED,1065,780,20,60,9],[RED,1030,880,90,40,4],[RED,870,905,60,40,6],[RED,655,880,60,30,4],
  [RED,1265,470,40,55,7],[RED,1350,560,40,110,22],[RED,1385,720,25,90,12],[RED,900,1000,110,80,2.4],[RED,1390,1060,60,50,3],[RED,530,1478,24,26,25],
  [RED,370,1505,50,22,4],[RED,700,400,90,30,2.2],[RED,1330,880,60,20,3],[RED,560,1000,35,40,3],[RED,910,1160,50,30,3],
  [RED,760,1110,30,30,3],[RED,480,1105,30,30,8],[RED,1165,315,30,30,14],[RED,1240,370,20,30,3],[RED,800,420,60,30,3],[RED,590,730,30,30,3],
  [LBLUE,650,440,60,45,4],[LBLUE,830,1225,42,48,90],[LBLUE,750,1325,22,70,70],[LBLUE,520,1465,60,45,9],[LBLUE,400,1340,60,120,8],
  [LBLUE,870,830,80,40,5],[LBLUE,1105,1190,32,50,14],[LBLUE,1225,540,30,50,5],[LBLUE,840,1410,80,45,16],[LBLUE,690,980,110,70,3],
  [LBLUE,620,1490,30,90,14],[LBLUE,1000,1290,22,70,9],[LBLUE,660,370,40,40,4],[LBLUE,540,1040,50,60,6],[LBLUE,970,560,60,60,1.5],
  [LBLUE,1130,830,60,60,2],[LBLUE,1100,420,120,60,3],[LBLUE,520,1150,130,60,6],[LBLUE,980,480,60,90,2.5],[LBLUE,600,1280,60,60,3],[LBLUE,1040,1020,60,90,3],
  [LBLUE,760,830,120,140,1.4],[LBLUE,1120,540,80,90,2],[LBLUE,1160,980,50,60,2],
  [LORANGE,820,1300,36,40,24],[LORANGE,1060,1240,70,45,14],[LORANGE,1125,1450,38,120,26],[LORANGE,1175,1240,38,80,13],[LORANGE,1310,1030,90,60,4],
  [LORANGE,1410,1180,70,130,4],[LORANGE,1360,1450,60,120,4],[LORANGE,650,1480,40,50,3],[LORANGE,1280,720,60,50,3],[LORANGE,900,1380,60,120,3],[LORANGE,1160,490,50,60,2],
  [ORANGE,1055,1370,42,110,40],[ORANGE,1090,1500,50,50,16],[ORANGE,860,540,160,110,1.4],[ORANGE,940,1330,50,150,4],[ORANGE,1350,1150,110,120,2.4],[ORANGE,1230,1400,60,150,4],
  [ORANGE,1180,1330,22,50,8],[ORANGE,1230,650,110,100,2],[ORANGE,900,950,80,60,2.5],[ORANGE,1060,1120,150,50,2.5],[ORANGE,1380,700,60,90,2],[ORANGE,770,1330,12,50,8],[ORANGE,1340,830,60,60,2],
  [GREEN,690,585,80,55,2.4],[GREEN,630,690,90,80,1.2],[GREEN,540,1370,90,110,4],[GREEN,420,1510,110,50,4],[GREEN,820,1315,18,26,40],
  [GREEN,620,1090,90,90,1],[GREEN,640,790,90,60,1],[GREEN,840,620,100,80,.8],[GREEN,1000,850,40,50,1.5],
  [BLUE,955,870,26,26,6],[BLUE,1465,1210,18,80,8],[BLUE,720,950,50,40,1.6],[BLUE,1290,1480,22,70,3],[BLUE,970,480,50,40,1.2],[BLUE,1060,600,40,60,1.2],[BLUE,620,1040,40,30,2],[BLUE,910,1230,50,60,1.2],[BLUE,700,320,50,15,5]
];

let seed = 20241013;
function rnd() {
  seed = (seed + 0x6D2B79F5) | 0;
  let t = Math.imul(seed ^ seed >>> 15, 1 | seed);
  t = t + Math.imul(t ^ t >>> 7, 61 | t) ^ t;
  return ((t ^ t >>> 14) >>> 0) / 4294967296;
}
function inside(x, y, p) {
  let r = false;
  for (let i = 0, j = p.length - 1; i < p.length; j = i++) {
    if ((p[i][1] > y) !== (p[j][1] > y) && x < (p[j][0] - p[i][0]) * (y - p[i][1]) / (p[j][1] - p[i][1]) + p[i][0]) r = !r;
  }
  return r;
}
function edge(x, y) {
  let best = 1e9;
  for (let i = 1; i < outline.length; i++) {
    const ax = px(outline[i-1][0]), ay = py(outline[i-1][1]), bx = px(outline[i][0]), by = py(outline[i][1]);
    const dx = bx - ax, dy = by - ay;
    const t = Math.max(0, Math.min(1, ((x - ax) * dx + (y - ay) * dy) / (dx * dx + dy * dy)));
    best = Math.min(best, Math.hypot(x - ax - t * dx, y - ay - t * dy));
  }
  return best;
}
// Smooth patchiness, one lattice per colour plus one for cell density.
const lattice = Array.from({length: 9}, () => Array.from({length: 14400}, rnd));
function noise(k, x, y, cell) {
  const gx = x / cell, gy = y / cell, ix = gx | 0, iy = gy | 0, fx = gx - ix, fy = gy - iy, g = lattice[k];
  const at = (a, b) => g[(b % 120) * 120 + a % 120];
  return (at(ix, iy) * (1 - fx) + at(ix + 1, iy) * fx) * (1 - fy) + (at(ix, iy + 1) * (1 - fx) + at(ix + 1, iy + 1) * fx) * fy;
}

const dots = [];
const STEP = 4.3;
for (let y = 190; y < 1218; y += STEP) {
  for (let x = 150; x < 1440; x += STEP) {
    const cx = x + (rnd() - .5) * 6, cy = y + (rnd() - .5) * 6;
    const u = (cx + 23) / SX, v = (cy - 195) / SY;
    const wob = (noise(8, cx, cy, 11) - .5) * 18;
    if (!inside(u + wob, v - wob, outline)) continue;
    let keep = v > 1150 && u > 600 ? 1 : .92;
    for (const [d, poly] of voids) if (inside(u + wob, v + wob, poly)) keep = Math.min(keep, d);
    const clump = noise(8, cx, cy, 13);
    if (keep < .5) keep *= clump > .5 ? 1.35 : .35;
    else if (v < 1100 && clump < .18) keep *= .3;
    if (rnd() > keep) continue;
    const right = Math.max(0, Math.min(1, (u - 550) / 750));
    const low = v > 1150 ? 1 : 0;
    const w = [.3, 3.1 - 1.7 * right, 1.0 + 1.0 * right, .15 + .5 * right + .5 * low * right, 1.35 - 1.0 * right, .4, .2, .02];
    for (const [k, zx, zy, rx, ry, s] of zones) {
      const q = ((u - zx) / rx) ** 2 + ((v - zy) / ry) ** 2;
      if (q < 3) w[k] += s * Math.exp(-q * q);
    }
    for (let k = 0; k < 7; k++) w[k] *= .12 + 5 * noise(k, cx, cy, 12) ** 3;
    const e = edge(cx, cy);
    if (e < 32) {
      const calm = (v > 1350 && u > 1380) || (v < 420 && u > 880 && u < 1080);
      w[RED] += (calm ? 3 : 14) * (1 - e / 32) ** 1.3 * (.15 + noise(6, cx, cy, 20) * 1.8);
      if (e < 9) w[BLUE] += 4 * noise(0, cx, cy, 14) ** 2;
    }
    let total = 0;
    for (const a of w) total += a;
    let r = rnd() * total, k = 0;
    while (k < 7 && (r -= w[k]) > 0) k++;
    dots.push([cx, cy, k, rnd()]);
  }
}
dots.sort((a, b) => a[3] - b[3]);
dots.push([px(771), py(71), RED], [px(892), py(164), RED], [px(1158), py(289), BLUE], [px(371), py(1183), RED]);
for (const [x, y, k] of dots) {
  ctx.fillStyle = COLORS[k];
  ctx.beginPath();
  ctx.arc(x, y, 4, 0, 6.2832);
  ctx.fill();
}
```
